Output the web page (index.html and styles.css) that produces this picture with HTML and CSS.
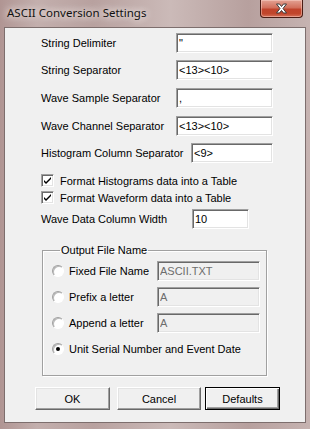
FILE: index.html
```html
<!DOCTYPE html>
<html lang="en">
  <head>
    <meta charset="UTF-8" />
    <title>ASCII Conversion Settings</title>
    <link rel="stylesheet" href="styles.css">
  </head>
  <body>
    <div class="window">
      <div class="titlebar">
        <span class="title">ASCII Conversion Settings</span>
        <button class="close" type="button" aria-label="Close">
          <svg width="13" height="11" viewBox="0 0 13 11">
            <path d="M1.5 1 L4.5 1 L6.5 3.5 L8.5 1 L11.5 1 L8 5.5 L11.5 10 L8.5 10 L6.5 7.5 L4.5 10 L1.5 10 L5 5.5 Z"
                  fill="#fff" stroke="#3b3b3b" stroke-width="1" stroke-linejoin="round"/>
          </svg>
        </button>
      </div>

      <div class="client">
        <div class="row r1">
          <label>String Delimiter</label>
          <input class="text" type="text" value='"' />
        </div>
        <div class="row r2">
          <label>String Separator</label>
          <input class="text" type="text" value="&lt;13&gt;&lt;10&gt;" />
        </div>
        <div class="row r3">
          <label>Wave Sample Separator</label>
          <input class="text" type="text" value="," />
        </div>
        <div class="row r3">
          <label>Wave Channel Separator</label>
          <input class="text" type="text" value="&lt;13&gt;&lt;10&gt;" />
        </div>
        <div class="row r2">
          <label>Histogram Column Separator</label>
          <input class="text short" type="text" value="&lt;9&gt;" />
        </div>

        <div class="check first">
          <span class="box">
            <svg width="9" height="9" viewBox="0 0 9 9"><path d="M1 4 L3 6 L8 1 L8 3 L3 8 L1 6 Z" fill="#000"/></svg>
          </span>
          <span>Format Histograms data into a Table</span>
        </div>
        <div class="check">
          <span class="box">
            <svg width="9" height="9" viewBox="0 0 9 9"><path d="M1 4 L3 6 L8 1 L8 3 L3 8 L1 6 Z" fill="#000"/></svg>
          </span>
          <span>Format Waveform data into a Table</span>
        </div>

        <div class="row width-row">
          <label>Wave Data Column Width</label>
          <input class="text narrow" type="text" value="10" />
        </div>

        <fieldset class="group">
          <legend>Output File Name</legend>
          <div class="opt">
            <span class="radio"></span>
            <span class="opt-label">Fixed File Name</span>
            <input class="text off" type="text" value="ASCII.TXT" disabled />
          </div>
          <div class="opt">
            <span class="radio"></span>
            <span class="opt-label">Prefix a letter</span>
            <input class="text off" type="text" value="A" disabled />
          </div>
          <div class="opt">
            <span class="radio"></span>
            <span class="opt-label">Append a letter</span>
            <input class="text off" type="text" value="A" disabled />
          </div>
          <div class="opt last">
            <span class="radio on"></span>
            <span class="opt-label">Unit Serial Number and Event Date</span>
          </div>
        </fieldset>

        <div class="buttons">
          <button class="btn" type="button">OK</button>
          <button class="btn cancel" type="button">Cancel</button>
          <button class="btn default" type="button">Defaults</button>
        </div>
      </div>
    </div>
  </body>
</html>
```

FILE: styles.css
```css
html, body {
  margin: 0;
  padding: 0;
}
body {
  width: 310px;
  height: 429px;
  overflow: hidden;
  font-family: "Liberation Sans", Arial, sans-serif;
  font-size: 11px;
  color: #000;
}
.window {
  width: 310px;
  height: 429px;
  box-sizing: border-box;
  display: flex;
  flex-direction: column;
  background: linear-gradient(90deg, #b09593 0%, #c3afad 12%, #b8a19f 30%, #cbbab8 55%, #b7a09e 80%, #c6b3b1 100%);
}
.titlebar {
  height: 27px;
  display: flex;
  align-items: flex-start;
  justify-content: space-between;
  padding-left: 7px;
  padding-right: 7px;
}
.title {
  margin-top: 5px;
  font-family: "Noto Sans", "Open Sans", sans-serif;
  font-size: 11.5px;
  color: #111;
  text-shadow: 0 0 6px #f4ecea, 0 0 10px #f4ecea;
}
.close {
  width: 43px;
  height: 18px;
  margin: 0;
  padding: 0;
  border: 1px solid #4a1c14;
  border-top: none;
  border-radius: 0 0 4px 4px;
  background: linear-gradient(180deg, #e3a293 0%, #d2705c 45%, #c0432b 55%, #c1462c 80%, #d5725a 100%);
  box-shadow: inset 0 0 0 1px rgba(255, 220, 210, 0.45);
  display: flex;
  align-items: center;
  justify-content: center;
}
.client {
  flex: 1;
  margin: 0 4px 6px 4px;
  border: 1px solid #7d6e6d;
  background: #f0f0f0;
  padding-top: 5px;
  display: flex;
  flex-direction: column;
}

/* label / textbox rows */
.row {
  display: flex;
  align-items: center;
  justify-content: space-between;
  padding: 0 32px 0 36px;
  height: 20px;
}
.r2 { margin-top: 7px; }
.r3 { margin-top: 8px; }
.text {
  box-sizing: border-box;
  width: 97px;
  height: 20px;
  margin: 0;
  padding: 0 2px;
  font-family: "Liberation Sans", Arial, sans-serif;
  font-size: 11px;
  color: #000;
  background: #fff;
  border: 1px solid;
  border-color: #a0a0a0 #fff #fff #a0a0a0;
  box-shadow: inset 1px 1px 0 #696969, inset -1px -1px 0 #e3e3e3;
  outline: none;
}
.short { width: 82px; }
.width-row {
  justify-content: flex-start;
  margin-top: 5px;
}
.width-row label {
  width: 151px;
}
.narrow {
  width: 57px;
}

/* checkboxes */
.check {
  display: flex;
  align-items: center;
  gap: 6px;
  padding-left: 36px;
  height: 13px;
  margin-top: 4px;
}
.check.first { margin-top: 11px; }
.box {
  box-sizing: border-box;
  width: 13px;
  height: 13px;
  background: #fff;
  border: 1px solid;
  border-color: #a0a0a0 #fff #fff #a0a0a0;
  box-shadow: inset 1px 1px 0 #696969, inset -1px -1px 0 #e3e3e3;
  display: flex;
  align-items: center;
  justify-content: center;
}

/* group box */
.group {
  margin: 15px 0 0 37px;
  width: 224px;
  box-sizing: border-box;
  padding: 5px 6px 16px 9px;
  border: 1px solid #a0a0a0;
  box-shadow: 1px 1px 0 #fff, inset 1px 1px 0 #fff;
}
.group legend {
  padding: 0 1px;
  margin-left: 8px;
}
.opt {
  display: flex;
  align-items: center;
  height: 20px;
  margin-bottom: 6px;
}
.opt.last {
  margin-top: 2px;
  margin-bottom: 0;
}
.radio {
  box-sizing: border-box;
  width: 12px;
  height: 12px;
  border-radius: 50%;
  background: #fff;
  border: 1px solid;
  border-color: #a0a0a0 #fff #fff #a0a0a0;
  box-shadow: inset 1px 1px 0 #b9b9b9;
  display: flex;
  align-items: center;
  justify-content: center;
}
.radio.on::after {
  content: "";
  width: 4px;
  height: 4px;
  border-radius: 50%;
  background: #000;
}
.opt-label {
  width: 88px;
  margin-left: 5px;
  white-space: nowrap;
}
.text.off {
  width: 103px;
  background: #f0f0f0;
  color: #6d6d6d;
}

/* buttons */
.buttons {
  display: flex;
  margin-top: 11px;
  padding-left: 30px;
}
.btn {
  box-sizing: border-box;
  width: 75px;
  height: 23px;
  margin: 0;
  padding: 0;
  font-family: "Liberation Sans", Arial, sans-serif;
  font-size: 11px;
  color: #000;
  background: #f0f0f0;
  border: 1px solid;
  border-color: #fff #696969 #696969 #fff;
  box-shadow: inset -1px -1px 0 #a0a0a0, inset 1px 1px 0 #e3e3e3;
}
.cancel {
  width: 84px;
  margin-left: 7px;
}
.default {
  margin-left: 4px;
  border-color: #000;
  box-shadow: inset 1px 1px 0 #fff, inset -1px -1px 0 #696969, inset -2px -2px 0 #a0a0a0;
}
```
